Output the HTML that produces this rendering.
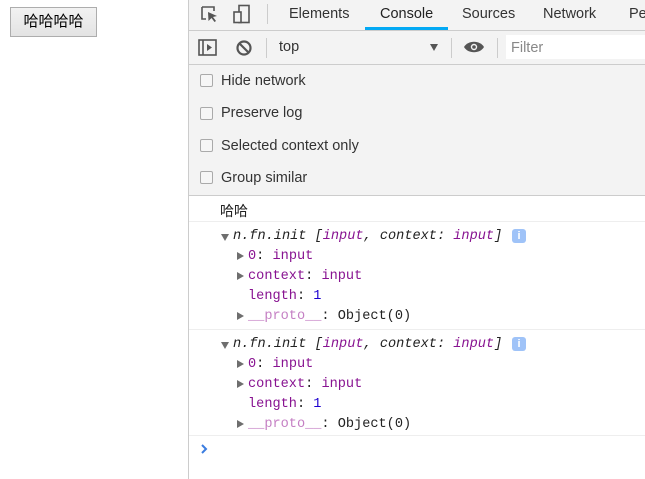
<!DOCTYPE html>
<html><head><meta charset="utf-8"><style>
*{margin:0;padding:0;box-sizing:border-box}
body{width:645px;height:479px;overflow:hidden;background:#fff;position:relative;font-family:"Liberation Sans","Noto Sans CJK SC",sans-serif}
.a{position:absolute;white-space:nowrap}
.btn{left:10px;top:7px;width:87px;height:30px;border:1px solid #adadad;background:linear-gradient(#f2f2f2,#e3e3e3);font-size:15px;text-align:center;line-height:28px;color:#000}
.dt{left:188px;top:0;width:457px;height:479px;border-left:1px solid #ccc;background:#fff}
.tabs{left:189px;top:0;width:456px;height:31px;background:#f3f3f3;border-bottom:1px solid #ccc}
.tab{font-size:14.5px;color:#333;top:6px}
.tb{left:189px;top:31px;width:456px;height:34px;background:#f3f3f3;border-bottom:1px solid #ccc}
.cb{left:189px;top:65px;width:456px;height:131px;background:#f3f3f3;border-bottom:1px solid #ccc}
.ck{width:13px;height:13px;border:1px solid #aaa;border-radius:2px;background:#f6f6f6;left:200px}
.cl{font-size:14.5px;color:#333;left:221px}
.m{font-family:"Liberation Mono",monospace;font-size:13.6px;color:#222}
.p{color:#881391}.n{color:#1c00cf}.g{color:#c580c4}
.tr{width:0;height:0;border-top:4px solid transparent;border-bottom:4px solid transparent;border-left:7px solid #6e6e6e}
.td{width:0;height:0;border-left:4px solid transparent;border-right:4px solid transparent;border-top:7px solid #6e6e6e}
.sep{left:189px;width:456px;height:1px;background:#eee}
.vs{width:1px;height:20px;background:#ccc}
</style></head><body>
<div class="a btn">哈哈哈哈</div>
<div class="a dt"></div>
<div class="a tabs"></div>
<svg class="a" style="left:200px;top:5px" width="20" height="20" viewBox="0 0 20 20"><path d="M2 2h12v4M2 2v12h4" fill="none" stroke="#555" stroke-width="1.6"/><path d="M8 7l9 4-4 1 3 4-1.5 1-3-4-3 3z" fill="#555"/></svg>
<svg class="a" style="left:232px;top:4px" width="20" height="20" viewBox="0 0 20 20"><rect x="7" y="1.5" width="10" height="17" fill="none" stroke="#555" stroke-width="1.6"/><rect x="2" y="8" width="7" height="10.5" fill="#f3f3f3" stroke="#555" stroke-width="1.6"/></svg>
<div class="a vs" style="left:267px;top:4px"></div>
<div class="a tab" style="left:289px">Elements</div>
<div class="a tab" style="left:380px;color:#222">Console</div>
<div class="a" style="left:365px;top:27px;width:83px;height:3px;background:#03a9f4"></div>
<div class="a tab" style="left:462px">Sources</div>
<div class="a tab" style="left:543px">Network</div>
<div class="a tab" style="left:629px">Pe</div>
<div class="a tb"></div>
<svg class="a" style="left:198px;top:39px" width="20" height="18" viewBox="0 0 20 18"><rect x="1" y="1" width="17" height="15" fill="none" stroke="#555" stroke-width="1.6"/><line x1="5" y1="1" x2="5" y2="16" stroke="#555" stroke-width="1.6"/><path d="M9 5l5 3.5-5 3.5z" fill="#555"/></svg>
<svg class="a" style="left:235px;top:39px" width="18" height="18" viewBox="0 0 18 18"><circle cx="9" cy="9" r="6.5" fill="none" stroke="#555" stroke-width="2.2"/><line x1="4.5" y1="4.5" x2="13.5" y2="13.5" stroke="#555" stroke-width="2.2"/></svg>
<div class="a vs" style="left:266px;top:38px"></div>
<div class="a" style="left:279px;top:39px;font-size:14.5px;color:#333">top</div>
<div class="a td" style="left:430px;top:44px;border-top-color:#555"></div>
<div class="a vs" style="left:451px;top:38px"></div>
<svg class="a" style="left:463px;top:40px" width="22" height="14" viewBox="0 0 22 14"><path d="M1 7C5 0 17 0 21 7 17 14 5 14 1 7z" fill="#555"/><circle cx="11" cy="7" r="3.2" fill="#f3f3f3"/><circle cx="11" cy="7" r="1.8" fill="#555"/></svg>
<div class="a vs" style="left:497px;top:38px"></div>
<div class="a" style="left:506px;top:35px;width:139px;height:24px;background:#fff"></div>
<div class="a" style="left:511px;top:40px;font-size:14.5px;color:#888">Filter</div>
<div class="a cb"></div>
<div class="a ck" style="top:74px"></div><div class="a cl" style="top:73px">Hide network</div>
<div class="a ck" style="top:107px"></div><div class="a cl" style="top:105px">Preserve log</div>
<div class="a ck" style="top:139px"></div><div class="a cl" style="top:138px">Selected context only</div>
<div class="a ck" style="top:171px"></div><div class="a cl" style="top:170px">Group similar</div>
<div class="a" style="left:220px;top:201px;font-size:14px;color:#222">哈哈</div>
<div class="a sep" style="top:221px"></div>
<div class="a td" style="left:221px;top:234px"></div>
<div class="a m" style="left:233px;top:229px;font-style:italic">n.fn.init [<span class="p">input</span>, context: <span class="p">input</span>]</div>
<div class="a" style="left:512px;top:229px;width:14px;height:14px;border-radius:3px;background:#9fc3f8;color:#fff;font-size:11px;text-align:center;line-height:14px;font-weight:bold">i</div>
<div class="a tr" style="left:237px;top:252px"></div><div class="a m" style="left:248px;top:249px"><span class="p">0</span>: <span class="p">input</span></div>
<div class="a tr" style="left:237px;top:272px"></div><div class="a m" style="left:248px;top:269px"><span class="p">context</span>: <span class="p">input</span></div>
<div class="a m" style="left:248px;top:289px"><span class="p">length</span>: <span class="n">1</span></div>
<div class="a tr" style="left:237px;top:312px"></div><div class="a m" style="left:248px;top:309px"><span class="g">__proto__</span>: Object(0)</div>
<div class="a sep" style="top:329px"></div>
<div class="a td" style="left:221px;top:342px"></div>
<div class="a m" style="left:233px;top:337px;font-style:italic">n.fn.init [<span class="p">input</span>, context: <span class="p">input</span>]</div>
<div class="a" style="left:512px;top:337px;width:14px;height:14px;border-radius:3px;background:#9fc3f8;color:#fff;font-size:11px;text-align:center;line-height:14px;font-weight:bold">i</div>
<div class="a tr" style="left:237px;top:360px"></div><div class="a m" style="left:248px;top:357px"><span class="p">0</span>: <span class="p">input</span></div>
<div class="a tr" style="left:237px;top:380px"></div><div class="a m" style="left:248px;top:377px"><span class="p">context</span>: <span class="p">input</span></div>
<div class="a m" style="left:248px;top:397px"><span class="p">length</span>: <span class="n">1</span></div>
<div class="a tr" style="left:237px;top:420px"></div><div class="a m" style="left:248px;top:417px"><span class="g">__proto__</span>: Object(0)</div>
<div class="a sep" style="top:435px"></div>
<svg class="a" style="left:200px;top:444px" width="8" height="10" viewBox="0 0 8 10"><path d="M2 1l4 4-4 4" fill="none" stroke="#3b7de0" stroke-width="2"/></svg>
</body></html>
